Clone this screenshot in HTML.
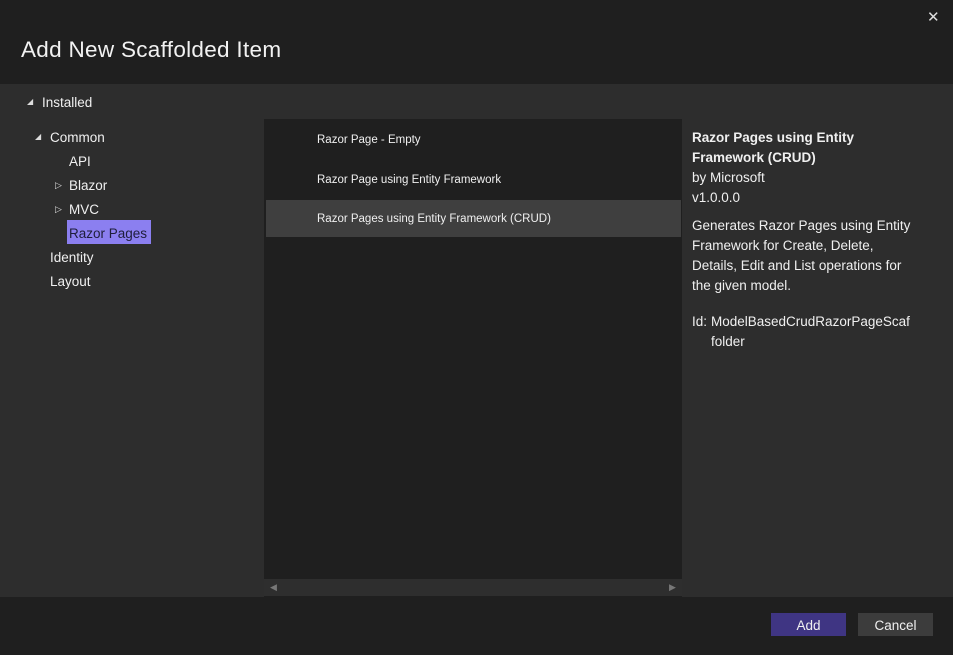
<!DOCTYPE html>
<html><head><style>
body{margin:0;width:953px;height:655px;background:#2d2d2d;font-family:"Liberation Sans",sans-serif;color:#f0f0f0;position:relative;overflow:hidden}
.a{position:absolute;white-space:nowrap}
.t{font-size:13.5px}
</style></head><body>
<div class="a" style="left:0;top:0;width:953px;height:84px;background:#1f1f1f"></div>
<div class="a" style="left:21px;top:37px;font-size:22.5px;color:#f2f2f2;letter-spacing:0.3px">Add New Scaffolded Item</div>
<div class="a" style="left:927px;top:8px;font-size:15px;color:#ddd">✕</div>
<div class="a" style="left:27px;top:97px;font-size:8px;color:#ddd">◢</div>
<div class="a t" style="left:42px;top:95px">Installed</div>
<div class="a" style="left:35px;top:132px;font-size:8px;color:#ddd">◢</div>
<div class="a t" style="left:50px;top:130px">Common</div>
<div class="a t" style="left:69px;top:154px">API</div>
<div class="a" style="left:55px;top:180px;font-size:9px;color:#ddd">▷</div>
<div class="a t" style="left:69px;top:178px">Blazor</div>
<div class="a" style="left:55px;top:204px;font-size:9px;color:#ddd">▷</div>
<div class="a t" style="left:69px;top:202px">MVC</div>
<div class="a" style="left:67px;top:220px;width:84px;height:24px;background:#8b7ff0"></div>
<div class="a t" style="left:69px;top:226px;color:#1e1e3a">Razor Pages</div>
<div class="a t" style="left:50px;top:250px">Identity</div>
<div class="a t" style="left:50px;top:274px">Layout</div>
<div class="a" style="left:264px;top:119px;width:418px;height:478px;background:#1f1f1f"></div>
<div class="a" style="left:266px;top:200px;width:415px;height:37px;background:#3f3f3f"></div>
<div class="a" style="left:317px;top:134px;font-size:11.5px">Razor Page - Empty</div>
<div class="a" style="left:317px;top:174px;font-size:11.5px">Razor Page using Entity Framework</div>
<div class="a" style="left:317px;top:213px;font-size:11.5px">Razor Pages using Entity Framework (CRUD)</div>
<div class="a" style="left:264px;top:579px;width:418px;height:17px;background:#2e2e2e"></div>
<div class="a" style="left:270px;top:582px;font-size:9px;color:#777">◀</div>
<div class="a" style="left:669px;top:582px;font-size:9px;color:#777">▶</div>
<div class="a t" style="left:692px;top:128px;font-weight:bold;line-height:20px;white-space:normal;width:250px">Razor Pages using Entity<br>Framework (CRUD)</div>
<div class="a t" style="left:692px;top:168px;line-height:20px">by Microsoft<br>v1.0.0.0</div>
<div class="a t" style="left:692px;top:216px;line-height:20px">Generates Razor Pages using Entity<br>Framework for Create, Delete,<br>Details, Edit and List operations for<br>the given model.</div>
<div class="a t" style="left:692px;top:312px;line-height:20px">Id:</div>
<div class="a t" style="left:711px;top:312px;line-height:20px">ModelBasedCrudRazorPageScaf<br>folder</div>
<div class="a" style="left:0;top:597px;width:953px;height:58px;background:#1f1f1f"></div>
<div class="a t" style="left:771px;top:613px;width:75px;height:23px;background:#3f3583;text-align:center;line-height:25px">Add</div>
<div class="a t" style="left:858px;top:613px;width:75px;height:23px;background:#3c3c3c;text-align:center;line-height:25px">Cancel</div>
</body></html>
